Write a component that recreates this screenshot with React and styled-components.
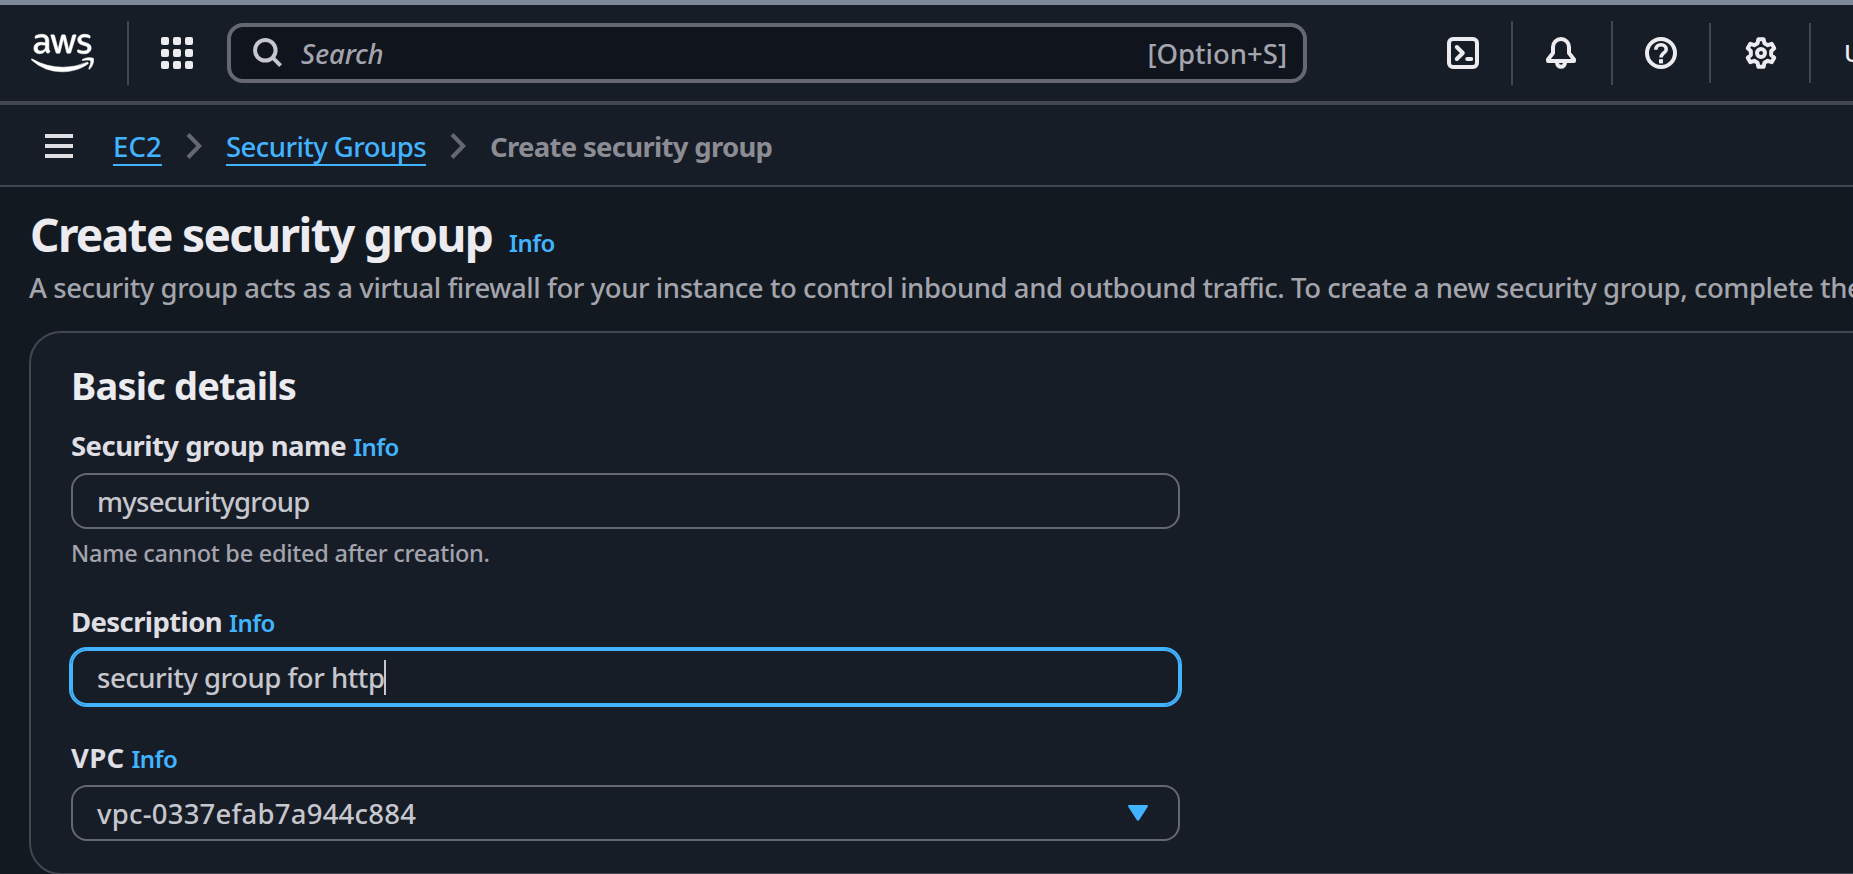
import React from "react";
import styled, { createGlobalStyle } from "styled-components";
import { FaAws } from "react-icons/fa";

const color = {
  stripe: "#7d8998",
  layer: "#171d27",
  page: "#131920",
  divider: "#424650",
  control: "#656871",
  link: "#42b4ff",
  heading: "#ebebf0",
  label: "#dedee3",
  body: "#c6c6cd",
  muted: "#a4a4ad",
};

const GlobalStyle = createGlobalStyle`
  *, *::before, *::after { box-sizing: border-box; }
  body {
    margin: 0;
    background: ${color.page};
    color: ${color.body};
    font-family: "Noto Sans", "Open Sans", sans-serif;
    font-size: 27.5px;
    font-weight: 500;
    line-height: 36px;
    overflow: hidden;
  }
`;

const Page = styled.div`
  width: 100%;
  height: 100vh;
  overflow: hidden;
  white-space: nowrap;
`;

const TopNav = styled.header`
  display: flex;
  align-items: center;
  height: 105px;
  padding-left: 31px;
  background: ${color.layer};
  border-top: 5px solid ${color.stripe};
  border-bottom: 4px solid ${color.divider};
`;

const Logo = styled(FaAws)`
  flex: none;
  width: 63px;
  height: 50px;
  color: #fff;
  stroke-width: 6;
`;

const Divider = styled.span`
  flex: none;
  width: 2px;
  height: ${(p) => (p.$short ? 60 : 64)}px;
  background: ${color.divider};
`;

const LogoDivider = styled(Divider)`
  margin-left: 33px;
`;

const AppsButton = styled.button`
  display: grid;
  grid-template-columns: repeat(3, 8px);
  gap: 4px;
  margin: 0 34px 0 32px;
  padding: 0;
  border: 0;
  background: none;
`;

const AppsDot = styled.i`
  height: 8px;
  border-radius: 2px;
  background: ${color.heading};
`;

const SearchBox = styled.div`
  flex: none;
  display: flex;
  align-items: center;
  width: 1080px;
  height: 60px;
  padding: 0 16px 0 22px;
  border: 4px solid ${color.control};
  border-radius: 16px;
  background: #0f141d;
  color: ${color.muted};
`;

const SearchPlaceholder = styled.span`
  flex: 1;
  margin-left: 18px;
  padding-top: 2px;
  font-style: italic;
  letter-spacing: -0.15px;
`;

const Shortcut = styled.span`
  padding-top: 2px;
`;

const Utilities = styled.nav`
  display: flex;
  align-items: center;
  margin-left: 108px;
`;

const UtilityButton = styled.button`
  flex: none;
  display: flex;
  padding: 0 ${(p) => p.$right ?? 32}px 0 ${(p) => p.$left ?? 32}px;
  border: 0;
  background: none;
  color: ${color.heading};
`;

const Region = styled.span`
  margin-left: 33px;
  color: ${color.heading};
  font-size: 24px;
  line-height: 32px;
`;

const BreadcrumbBar = styled.div`
  display: flex;
  align-items: flex-start;
  height: 82px;
  padding: 23px 0 0 45px;
  background: ${color.layer};
  border-bottom: 2px solid ${color.divider};
`;

const MenuButton = styled.button`
  display: grid;
  gap: 6px;
  width: 28px;
  margin: 6px 40px 0 0;
  padding: 0;
  border: 0;
  background: none;
`;

const MenuLine = styled.i`
  height: 4px;
  background: ${color.label};
`;

const Crumb = styled.a`
  height: 38px;
  border-bottom: 2px solid ${color.link};
  color: ${color.link};
  line-height: 38px;
  letter-spacing: ${(p) => p.$tracking ?? 0}px;
`;

const CurrentCrumb = styled.span`
  color: #8c8c94;
  font-weight: 700;
  line-height: 38px;
  letter-spacing: -0.7px;
`;

const ChevronIcon = styled.svg`
  flex: none;
  width: 16px;
  height: 28px;
  margin: 4px 24px 0 24px;
  fill: none;
  stroke: ${color.control};
  stroke-width: 4;
`;

const Main = styled.main`
  padding: 17px 0 0 29px;
`;

const TitleRow = styled.div`
  display: flex;
  align-items: baseline;
  height: 60px;
`;

const Title = styled.h1`
  margin: 0 17px 0 1px;
  color: ${color.heading};
  font-size: 46px;
  font-weight: 700;
  line-height: 60px;
  letter-spacing: -1.65px;
`;

const Info = styled.a`
  color: ${color.link};
  font-size: 24px;
  font-weight: 600;
  line-height: 32px;
  letter-spacing: -0.55px;
`;

const Intro = styled.p`
  margin: 4px 0 23px;
  color: ${color.muted};
  line-height: 40px;
  letter-spacing: -0.436px;
`;

const Card = styled.section`
  display: flex;
  flex-direction: column;
  width: 1860px;
  height: 544px;
  padding: 28px 40px 32px;
  border: 2px solid ${color.divider};
  border-radius: 32px;
  background: ${color.layer};
`;

const CardTitle = styled.h2`
  margin: 0 0 17px;
  color: ${color.heading};
  font-size: 38px;
  font-weight: 700;
  line-height: 48px;
  letter-spacing: -0.82px;
`;

const Fields = styled.div`
  display: flex;
  flex-direction: column;
  gap: 33px;
  width: 1109px;
`;

const FieldHeader = styled.div`
  display: flex;
  align-items: baseline;
  gap: 7px;
  height: 40px;
  margin-bottom: 7px;
`;

const Label = styled.label`
  color: ${color.label};
  font-weight: 700;
  line-height: 40px;
  letter-spacing: ${(p) => p.$tracking}px;
`;

const Control = styled.div`
  display: flex;
  align-items: center;
  height: 56px;
  padding: 2px 30px 0 24px;
  border: 2px solid ${(p) => (p.$focused ? color.link : color.control)};
  border-radius: 16px;
  box-shadow: ${(p) => (p.$focused ? `0 0 0 2px ${color.link}` : "none")};
  letter-spacing: ${(p) => p.$tracking}px;
`;

const Caret = styled.span`
  width: 2px;
  height: 35px;
  margin-bottom: 1px;
  background: ${color.body};
`;

const DropArrow = styled.svg`
  width: 20px;
  height: 16px;
  margin: 0 0 2px auto;
  fill: ${color.link};
`;

const Hint = styled.div`
  margin-top: 8px;
  color: ${color.muted};
  font-size: 23.5px;
  line-height: 32px;
  letter-spacing: -0.26px;
`;

const LineIcon = styled.svg`
  display: block;
  width: 32px;
  height: 32px;
  fill: none;
  stroke: currentColor;
  stroke-width: 2;
  stroke-linejoin: round;
`;

const Magnifier = styled.svg`
  flex: none;
  width: 30px;
  height: 30px;
  fill: none;
  stroke: ${color.body};
  stroke-width: 4;
`;

/* Six-tooth outline: tooth tips and roots repeated every 60 degrees. */
const gearPoints = Array.from({ length: 6 }, (_, i) => {
  const a = (i * Math.PI) / 3;
  return [[-1.7, -4.9], [-1.3, -6.9], [1.3, -6.9], [1.7, -4.9]]
    .map(([x, y]) => [
      (8 + x * Math.cos(a) - y * Math.sin(a)).toFixed(2),
      (8 + x * Math.sin(a) + y * Math.cos(a)).toFixed(2),
    ].join(","))
    .join(" ");
}).join(" ");

const TerminalIcon = () => (
  <LineIcon viewBox="0 0 16 16">
    <rect x="1" y="1" width="14" height="14" rx="2" />
    <path d="M4.9 5 7.9 8 4.9 11M10.1 11h2" strokeLinecap="round" />
  </LineIcon>
);

const BellIcon = () => (
  <LineIcon viewBox="0 0 16 16">
    <path d="M12 8V5a4 4 0 0 0-8 0v3l-2.5 3.2V12h13v-.8z" />
    <path d="M6 12.8a2 2.1 0 0 0 4 0" />
  </LineIcon>
);

const HelpIcon = () => (
  <LineIcon viewBox="0 0 16 16">
    <circle cx="8" cy="8" r="7" />
    <path d="M5.4 6.4C5.4 4.8 6.5 3.9 8 3.9s2.6.9 2.6 2.3C10.6 8 8 8 8 10.3" strokeWidth="1.8" />
    <path d="M8 11.1v2.1" />
  </LineIcon>
);

const GearIcon = () => (
  <LineIcon viewBox="0 0 16 16">
    <polygon points={gearPoints} />
    <circle cx="8" cy="8" r="2" />
  </LineIcon>
);

const Chevron = () => (
  <ChevronIcon viewBox="0 0 16 28">
    <path d="M2 2.5 13.2 14 2 25.5" />
  </ChevronIcon>
);

function Field({ label, tracking, hint, children }) {
  return (
    <div>
      <FieldHeader>
        <Label $tracking={tracking}>{label}</Label>
        <Info>Info</Info>
      </FieldHeader>
      {children}
      {hint && <Hint>{hint}</Hint>}
    </div>
  );
}

export default function App() {
  return (
    <Page>
      <GlobalStyle />
      <TopNav>
        <Logo />
        <LogoDivider />
        <AppsButton aria-label="Services">
          {Array.from({ length: 9 }, (_, i) => <AppsDot key={i} />)}
        </AppsButton>
        <SearchBox>
          <Magnifier viewBox="0 0 30 30">
            <circle cx="12.3" cy="12.3" r="10.3" />
            <path d="M19.2 19.2 27.6 27.6" />
          </Magnifier>
          <SearchPlaceholder>Search</SearchPlaceholder>
          <Shortcut>[Option+S]</Shortcut>
        </SearchBox>
        <Utilities>
          <UtilityButton aria-label="CloudShell"><TerminalIcon /></UtilityButton>
          <Divider />
          <UtilityButton aria-label="Notifications" $right={34}><BellIcon /></UtilityButton>
          <Divider />
          <UtilityButton aria-label="Help"><HelpIcon /></UtilityButton>
          <Divider $short />
          <UtilityButton aria-label="Settings" $left={34}><GearIcon /></UtilityButton>
          <Divider $short />
          <Region>U</Region>
        </Utilities>
      </TopNav>

      <BreadcrumbBar>
        <MenuButton aria-label="Menu"><MenuLine /><MenuLine /><MenuLine /></MenuButton>
        <Crumb $tracking={0.15}>EC2</Crumb>
        <Chevron />
        <Crumb $tracking={-0.56}>Security Groups</Crumb>
        <Chevron />
        <CurrentCrumb>Create security group</CurrentCrumb>
      </BreadcrumbBar>

      <Main>
        <TitleRow>
          <Title>Create security group</Title>
          <Info>Info</Info>
        </TitleRow>
        <Intro>
          A security group acts as a virtual firewall for your instance to control inbound and outbound traffic. To create a new security group, complete the
        </Intro>
        <Card>
          <CardTitle>Basic details</CardTitle>
          <Fields>
            <Field label="Security group name" tracking={-0.53} hint="Name cannot be edited after creation.">
              <Control $tracking={-0.75}>mysecuritygroup</Control>
            </Field>
            <Field label="Description" tracking={-0.6}>
              <Control $focused $tracking={-0.47}>security group for http<Caret /></Control>
            </Field>
            <Field label="VPC" tracking={0.3}>
              <Control $tracking={0.22}>
                vpc-0337efab7a944c884
                <DropArrow viewBox="0 0 20 16">
                  <path d="M1.4 0h17.2c1.2 0 1.7 1 1 2l-8.4 12.9c-.6 1-1.8 1-2.4 0L.4 2C-.3 1 .2 0 1.4 0z" />
                </DropArrow>
              </Control>
            </Field>
          </Fields>
        </Card>
      </Main>
    </Page>
  );
}
